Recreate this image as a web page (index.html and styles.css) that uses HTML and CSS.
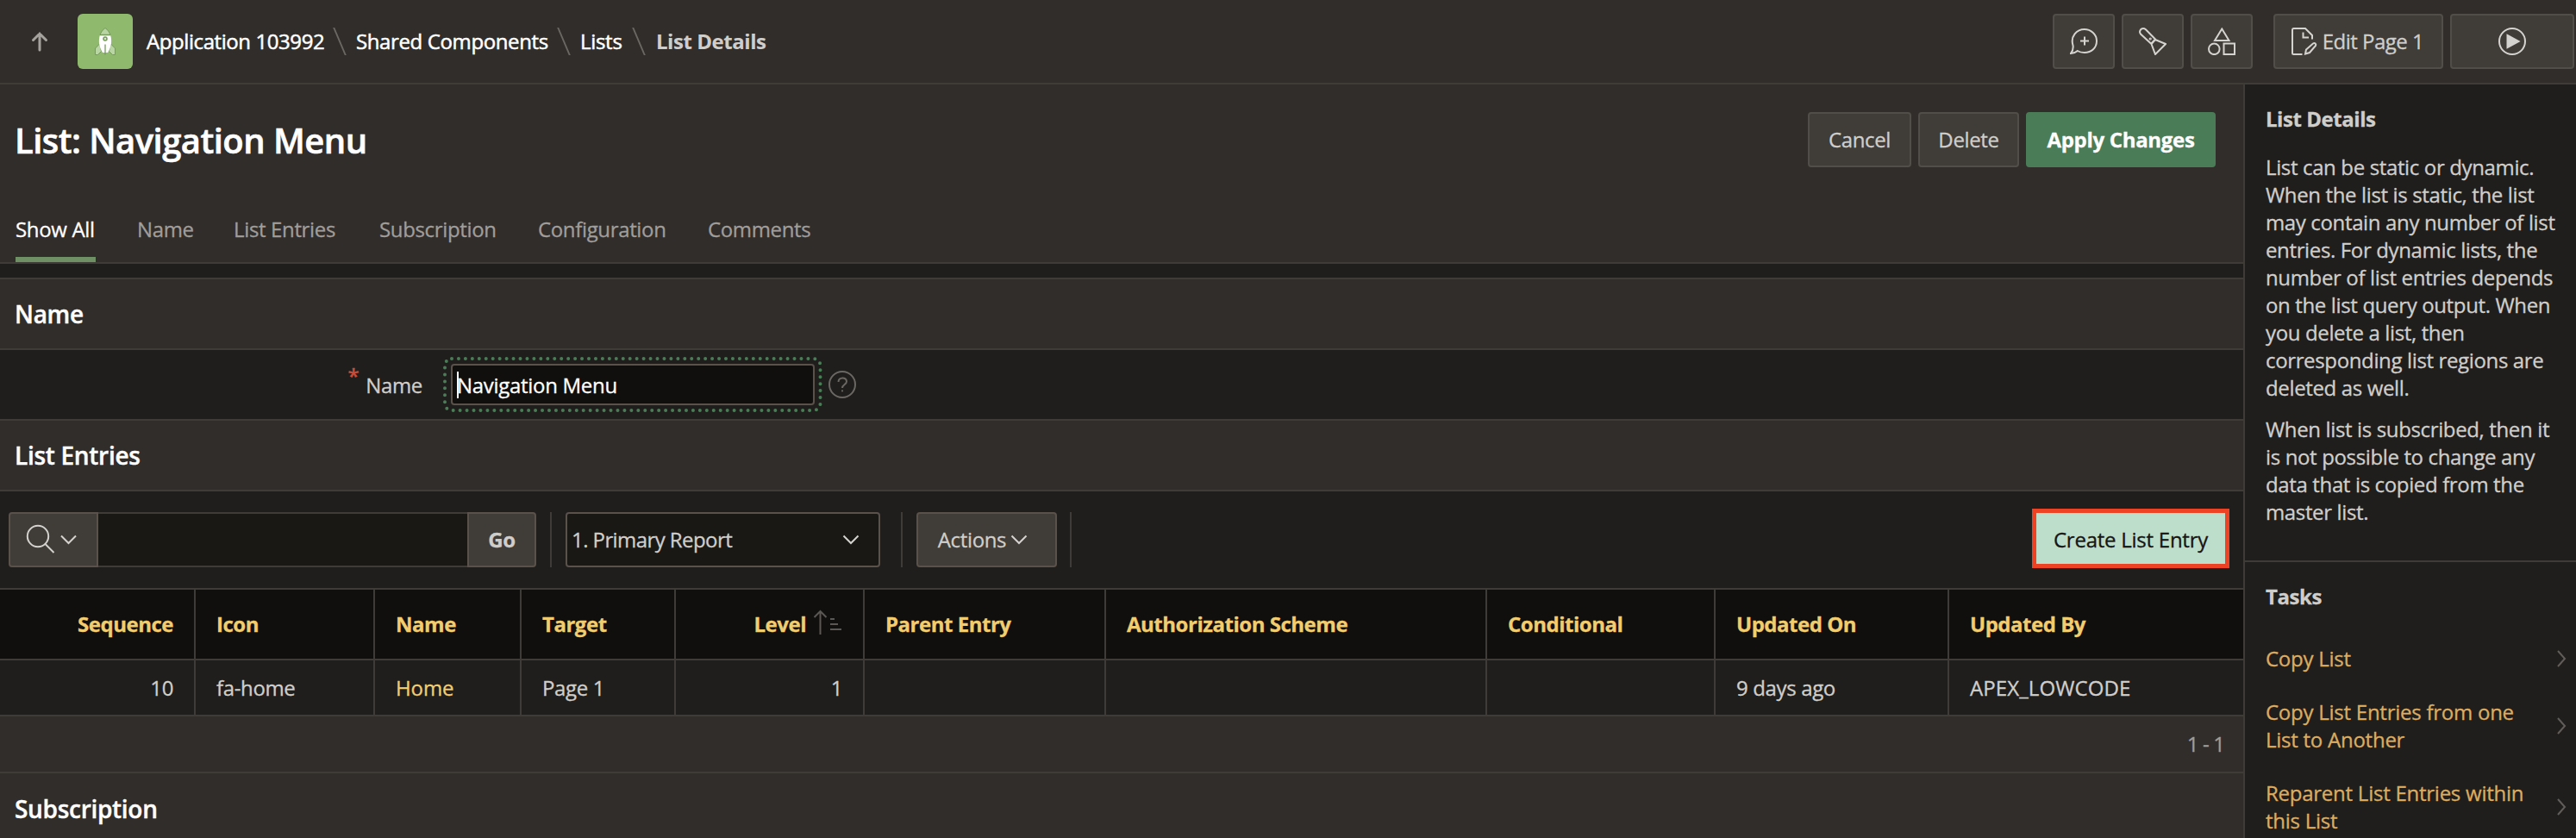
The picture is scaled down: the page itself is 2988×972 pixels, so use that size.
FILE: index.html
```html
<!DOCTYPE html>
<html lang="en">
<head>
<meta charset="utf-8">
<title>List Details</title>
<link rel="stylesheet" href="styles.css">
</head>
<body>
<header class="topbar">
  <svg class="up" width="20" height="24" viewBox="0 0 20 24"><path d="M10 22V3M2.500 10.500L10 3l7.500 7.500"/></svg>
  <span class="app-icon">
    <svg width="32" height="32" viewBox="0 0 32 32">
      <path d="M9.500 19l-5 5v7.500h3l4-4zM22.500 19l5 5v7.500h-3l-4-4z" fill="#b9d5a3" stroke="#759a5b"/>
      <path d="M16 .5c-3 2-5 5-6 8h12c-1-3-3-6-6-8z" fill="#b9d5a3" stroke="#759a5b"/>
      <path d="M10 8.500h12c2.200 7 1.200 14-3 20.500h-6c-4.200-6.500-5.200-13.500-3-20.500z" fill="#fff" stroke="none"/>
      <path d="M10 8.500h12M16 19.500v12" stroke="#759a5b" stroke-width="1.300"/>
      <circle cx="16" cy="13" r="2" fill="#d6e6ca" stroke="#759a5b" stroke-width="1.500"/>
    </svg>
  </span>
  <nav class="crumbs">
    <a class="c-app">Application 103992</a><i class="slash"></i>
    <a class="c-shared">Shared Components</a><i class="slash"></i>
    <a class="c-lists">Lists</a><i class="slash"></i>
    <b class="c-details">List Details</b>
  </nav>
  <div class="tools">
    <button class="btn tool"><svg class="ico" viewBox="0 0 32 32"><path d="M16.800 3C24 3 31 8.500 31 16.500S25 30 16.800 30c-3 0-6-.8-8-2C6.500 30 4 31 1 31c1.800-2 3-5 2.600-9C0 11 8 3 16.800 3zM17 11.500v10M12 16.500h10" transform="translate(0 -1)"/></svg></button>
    <button class="btn tool"><svg class="ico" viewBox="0 0 32 32"><path d="M14.500 19L2 7.500C0 5 1.500 1 5 1c1.200 0 2 .4 3 1.200L19.500 14M14.500 19l4.500-5 12 5-12 12zM14 19l5-5.500"/><circle cx="13.200" cy="13" r=".6"/></svg></button>
    <button class="btn tool"><svg class="ico" viewBox="0 0 32 32"><path d="M16.300 1.500L24.500 15H8zM18.500 18.500h12.500v12.500h-12.500z"/><circle cx="7.300" cy="24.800" r="6.300"/></svg></button>
    <button class="btn edit"><svg class="ico" viewBox="0 0 32 32"><path d="M13.500 31H3.500C2 31 2 30 2 29.500V3C2 1.500 2.500 1 3.500 1H17l8 8v4.500M14.500 5.500v6h6.500M17 30.500l1-5 8-7c2-1.500 4 .5 3 2.500l-7 8z"/></svg><span>Edit Page 1</span></button>
    <button class="btn run"><svg class="ico" viewBox="0 0 32 32"><circle cx="16" cy="16" r="15"/><path d="M10.500 9l13 7-13 7z" fill="#d5d3d0"/></svg></button>
  </div>
</header>

<div class="page">
  <main>
    <section class="hero">
      <div class="title-row">
        <h1>List: Navigation Menu</h1>
        <div class="actions">
          <button class="btn cancel">Cancel</button>
          <button class="btn delete">Delete</button>
          <button class="btn apply">Apply Changes</button>
        </div>
      </div>
      <nav class="tabs">
        <a class="active">Show All</a><a>Name</a><a>List Entries</a><a>Subscription</a><a>Configuration</a><a>Comments</a>
      </nav>
    </section>

    <h2 class="region first">Name</h2>
    <div class="field">
      <label><sup>*</sup><span>Name</span></label>
      <div class="input-focus"><div class="input"><i class="caret"></i><span>Navigation Menu</span></div>
        <svg class="dots" width="440" height="64" viewBox="0 0 440 64"><rect x="2" y="2" width="435.500" height="60" rx="8"/></svg>
      </div>
      <svg class="help" width="32" height="32" viewBox="0 0 32 32"><circle cx="16" cy="16" r="15"/><path d="M11.500 13c0-6 9.500-6 9.500-.5 0 3.500-5 3.500-5 7.500M16 22.500v1.800"/></svg>
    </div>

    <h2 class="region">List Entries</h2>
    <div class="toolbar">
      <div class="search">
        <button class="search-menu">
          <svg width="60" height="34" viewBox="0 0 60 34"><circle cx="14" cy="14" r="12.200"/><path d="M22.500 23L32.500 33M41 13.500l8.500 8.500 8.500-8.500"/></svg>
        </button>
        <span class="search-box"></span>
        <button class="go">Go</button>
      </div>
      <i class="sep s1"></i>
      <div class="select"><span>1. Primary Report</span><svg class="chev" viewBox="0 0 20 12"><path d="M1.500 1.500L10 10l8.500-8.500"/></svg></div>
      <i class="sep s2"></i>
      <button class="btn actions-btn"><span>Actions</span><svg class="chev" viewBox="0 0 20 12"><path d="M1.500 1.500L10 10l8.500-8.500"/></svg></button>
      <i class="sep s3"></i>
      <button class="create">Create List Entry</button>
    </div>

    <table>
      <colgroup><col class="k1"><col class="k2"><col class="k3"><col class="k4"><col class="k5"><col class="k6"><col class="k7"><col class="k8"><col class="k9"><col class="k10"></colgroup>
      <thead><tr><th class="num">Sequence</th><th>Icon</th><th>Name</th><th>Target</th><th class="num"><span class="sorted">Level<svg width="34" height="30" viewBox="0 0 34 30"><path d="M8.500 29V2M1.500 9l7-7 7 7M20 11h5M20 17h9M20 23h13"/></svg></span></th><th>Parent Entry</th><th>Authorization Scheme</th><th>Conditional</th><th>Updated On</th><th>Updated By</th></tr></thead>
      <tbody><tr><td class="num">10</td><td>fa-home</td><td class="link">Home</td><td>Page 1</td><td class="num">1</td><td></td><td></td><td></td><td>9 days ago</td><td class="owner">APEX_LOWCODE</td></tr></tbody>
    </table>
    <div class="pager">1 - 1</div>
    <h2 class="region last">Subscription</h2>
  </main>

  <aside>
    <section class="about">
      <h3>List Details</h3>
      <p>List can be static or dynamic.<br>When the list is static, the list<br>may contain any number of list<br>entries. For dynamic lists, the<br>number of list entries depends<br>on the list query output. When<br>you delete a list, then<br>corresponding list regions are<br>deleted as well.</p>
      <p>When list is subscribed, then it<br>is not possible to change any<br>data that is copied from the<br>master list.</p>
    </section>
    <section class="tasks">
      <h3>Tasks</h3>
      <a><span>Copy List</span><svg viewBox="0 0 12 20"><path d="M2 1l8 9-8 9"/></svg></a>
      <a><span>Copy List Entries from one<br>List to Another</span><svg viewBox="0 0 12 20"><path d="M2 1l8 9-8 9"/></svg></a>
      <a><span>Reparent List Entries within<br>this List</span><svg viewBox="0 0 12 20"><path d="M2 1l8 9-8 9"/></svg></a>
    </section>
  </aside>
</div>
</body>
</html>
```
FILE: styles.css
```css
* { box-sizing: border-box; }
body {
  margin: 0;
  width: 2988px;
  height: 972px;
  overflow: hidden;
  background: #201e1c;
  color: #d0cecb;
  font: 400 24px/32px "Open Sans", "Noto Sans", sans-serif;
  letter-spacing: -0.36px;
  white-space: nowrap;
  -webkit-text-stroke: 0.3px;
}
h1, h2, h3, p { margin: 0; }
button { font: inherit; letter-spacing: inherit; color: inherit; padding: 0; margin: 0; }
svg { display: block; flex: none; fill: none; stroke: #d5d3d0; stroke-width: 2; }

.btn {
  display: flex;
  align-items: center;
  justify-content: center;
  height: 64px;
  background: #403c37;
  border: 2px solid #514e49;
  border-radius: 4px;
}

/* Top bar */
.topbar {
  display: flex;
  align-items: center;
  height: 98px;
  padding-left: 36px;
  border-bottom: 2px solid #3f3b36;
  background: #312d2a;
}
.up { stroke: #a5a29e; stroke-width: 3; stroke-linecap: round; }
.app-icon {
  display: flex;
  align-items: center;
  justify-content: center;
  width: 64px;
  height: 64px;
  margin: 0 16px 0 34px;
  border-radius: 6px;
  background: #8fb96d;
}
.app-icon svg { stroke-width: 1; }
.crumbs { display: flex; align-items: center; color: #fff; font-weight: 500; -webkit-text-stroke: 0.5px; }
.c-app { width: 217px; letter-spacing: -0.42px; }
.c-shared { width: 234px; margin-left: 26px; letter-spacing: -0.38px; }
.c-lists { width: 61px; margin-left: 26px; letter-spacing: -0.3px; }
.c-details { margin-left: 27px; color: #d0cecb; letter-spacing: -0.45px; -webkit-text-stroke: 0.1px; font-weight: 700; }
.slash { width: 2px; height: 32px; margin-right: -2px; background: #6b6864; transform: translateX(6px) skewX(23deg); }
.tools { display: flex; gap: 8px; margin-left: auto; padding-right: 2px; }
.tool { width: 72px; }
.ico { width: 32px; height: 32px; }
.edit { width: 197px; margin-left: 16px; padding-right: 3px; gap: 5px; }
.edit span { letter-spacing: -0.5px; }
.run { width: 144px; }

/* Page frame */
.page { display: grid; grid-template-columns: 2602px 386px; height: 874px; }
aside { border-left: 2px solid #3f3b36; }

.hero { height: 208px; background: #312d2a; border-bottom: 2px solid #3f3b36; }
.title-row { display: flex; align-items: flex-start; justify-content: space-between; padding: 32px 32px 0 17px; }
h1 { height: 64px; font-weight: 600; font-size: 40px; line-height: 66px; letter-spacing: -0.54px; color: #fff; -webkit-text-stroke: 0.6px; }
.actions { display: flex; gap: 8px; }
.cancel { width: 120px; }
.delete { width: 117px; }
.apply { width: 220px; background: #4a7d57; border-color: #4a7d57; color: #fff; font-weight: 700; letter-spacing: -0.32px; }

.tabs {
  display: grid;
  grid-template-columns: 93px 64px 121px 136px 149px 120px;
  column-gap: 48px;
  height: 64px;
  margin: 46px 0 0 18px;
  color: #a09d9a;
}
.tabs a { line-height: 52px; letter-spacing: -0.35px; }
.tabs .active { color: #fff; border-bottom: 6px solid #6f8f65; }

.region {
  height: 84px;
  padding-left: 17px;
  border-top: 2px solid #3f3b36;
  border-bottom: 2px solid #3f3b36;
  background: #312d2a;
  color: #fff;
  font-weight: 600;
  font-size: 28px;
  line-height: 80px;
  letter-spacing: -0.3px;
  -webkit-text-stroke: 0.4px;
}
.first { margin-top: 16px; }
.last { border-top: 0; line-height: 82px; }

/* Name field */
.field { display: flex; align-items: center; height: 80px; }
label { display: flex; justify-content: flex-end; width: 490px; margin-right: 23px; }
sup { margin: -4px 8px 0 0; color: #c74e3a; font-size: 24px; font-weight: 600; line-height: 20px; vertical-align: baseline; }
label span { letter-spacing: -0.35px; padding-top: 1px; }
.input-focus { position: relative; padding: 0 10px; }
.input {
  display: flex;
  align-items: center;
  width: 422px;
  height: 48px;
  padding-left: 5px;
  border: 2px solid #5a514b;
  border-radius: 4px;
  background: #100f0d;
  color: #fff;
}
.input span { padding-top: 2px; letter-spacing: -0.3px; }
.caret { width: 2px; height: 31px; margin-right: -2px; background: #fff; }
.dots { position: absolute; left: 1px; top: -8px; stroke: #4a7d57; stroke-width: 4; stroke-linecap: round; stroke-dasharray: 0 7.950; }
.help { margin-left: 6px; stroke: #6b6864; }

/* Report toolbar */
.toolbar { display: flex; align-items: center; height: 112px; padding: 0 16px 0 10px; }
.search { display: flex; width: 612px; height: 64px; }
.search-menu { display: flex; align-items: center; width: 104px; padding: 0 0 2px 18px; background: #403c37; border: 2px solid #5a514b; border-radius: 4px 0 0 4px; }
.search-box { flex: 1; background: #191815; border: solid #3f3b36; border-width: 2px 0; }
.go { width: 80px; background: #403c37; border: 2px solid #5a514b; border-radius: 0 4px 4px 0; font-weight: 700; }
.sep { width: 2px; height: 64px; background: #3f3b36; }
.s1 { margin: 0 16px; }
.s2 { margin: 0 16px 0 24px; }
.s3 { margin-left: 15px; }
.select {
  display: flex;
  align-items: center;
  justify-content: space-between;
  width: 365px;
  height: 64px;
  padding: 0 22px 0 5px;
  border: 2px solid #5a514b;
  border-radius: 4px;
  background: #191815;
}
.select span { letter-spacing: -0.58px; }
.chev { width: 20px; height: 12px; }
.actions-btn { width: 163px; gap: 5px; padding-right: 9px; border-color: #5a514b; }
.actions-btn span { letter-spacing: -0.35px; }
.create {
  width: 229px;
  height: 69px;
  margin: -3px 0 0 auto;
  border: 5px solid #ee4225;
  background: #bddecb;
  color: #161513;
  line-height: 56px;
  padding-top: 3px;
  letter-spacing: -0.25px;
}

/* Report */
table { width: 2602px; table-layout: fixed; border-collapse: separate; border-spacing: 0; }
.k1 { width: 227px; } .k2 { width: 208px; } .k3 { width: 170px; } .k4 { width: 179px; } .k5 { width: 219px; }
.k6 { width: 280px; } .k7 { width: 442px; } .k8 { width: 265px; } .k9 { width: 271px; } .k10 { width: 341px; }
th, td { padding: 0 24px 0 24px; text-align: left; border-right: 2px solid #3f3b36; border-bottom: 2px solid #3f3b36; }
th:last-child, td:last-child { border-right: 0; }
th { height: 84px; border-top: 2px solid #3f3b36; background: #100f0d; color: #f2cd70; font-weight: 700; letter-spacing: -0.48px; }
td { height: 65px; }
.num { text-align: right; }
.sorted { display: flex; align-items: center; justify-content: flex-end; gap: 8px; }
.sorted svg { stroke: #5a5754; margin-top: -4px; }
.link { color: #f2cd70; letter-spacing: -0.1px; }
.owner { letter-spacing: 0.1px; }
.pager { height: 66px; padding-right: 22px; border-bottom: 2px solid #3f3b36; background: #312d2a; color: #a09d9a; line-height: 64px; text-align: right; letter-spacing: -0.9px; }

/* Side column */
.about { height: 554px; padding: 24px 0 0 24px; border-bottom: 2px solid #3f3b36; }
h3 { font-size: 24px; font-weight: 700; line-height: 32px; letter-spacing: -0.45px; }
.about h3 { margin-bottom: 24px; }
.about p { margin-bottom: 16px; }
.tasks { padding: 24px 0 0 24px; }
.tasks h3 { margin-bottom: 25px; }
.tasks a { display: flex; align-items: center; justify-content: space-between; padding: 15px 11px 15px 0; color: #dcac60; letter-spacing: -0.25px; }
.tasks svg { width: 12px; height: 20px; stroke: #605d5a; }
```
